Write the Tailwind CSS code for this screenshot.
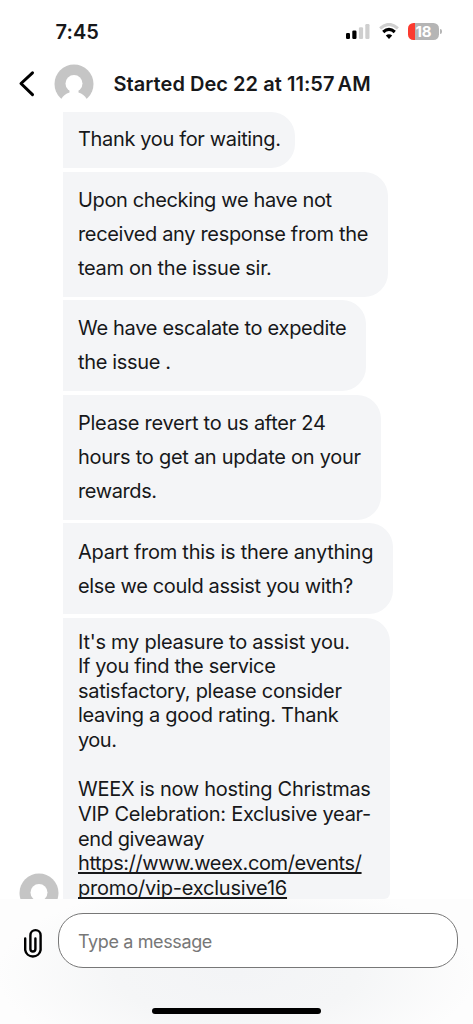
<!DOCTYPE html>
<html lang="en">
<head>
<meta charset="utf-8">
<meta name="viewport" content="width=device-width, initial-scale=1">
<title>Support chat</title>
<script src="https://cdn.jsdelivr.net/npm/@tailwindcss/browser@4"></script>
</head>
<body class="bg-white font-['Inter','Liberation_Sans',sans-serif] text-[#17181a]">
<div class="flex h-[1024px] w-[473px] flex-col overflow-hidden bg-white">

  <!-- Status bar -->
  <header class="flex h-[56px] shrink-0 items-start justify-between pl-[55.5px] pr-[31px] pt-[20px]">
    <span class="text-[20px] font-semibold leading-[24px] tracking-[0.1px]">7:45</span>
    <div class="flex items-start pt-[3px]">
      <svg class="mt-[1px] h-[16px] w-[24px]" viewBox="0 0 24 16">
        <rect x="0" y="9" width="4" height="6" rx="1.2" fill="#000"/>
        <rect x="6.3" y="6.5" width="4.2" height="8.5" rx="1.2" fill="#000"/>
        <rect x="12.9" y="3.3" width="4.2" height="11.7" rx="1.2" fill="#cfcfcf"/>
        <rect x="19.3" y="0" width="4.2" height="15" rx="1.2" fill="#cfcfcf"/>
      </svg>
      <svg class="ml-[9px] h-[16px] w-[20px]" viewBox="0 0 20 16" fill="none">
        <path d="M1.1 5.4Q10-2.6 18.9 5.4" stroke="#cfcfcf" stroke-width="3"/>
        <path d="M4.2 9Q10 3.8 15.8 9" stroke="#000" stroke-width="3.1"/>
        <path d="M10 16L6.8 12.6Q10 10 13.2 12.6Z" fill="#000"/>
      </svg>
      <div class="ml-[9px] flex h-[17px] w-[31px] items-center justify-center overflow-hidden rounded-[5.5px] bg-[linear-gradient(90deg,#fb3b30_6.5px,#b5b5b5_6.5px)] text-[15px] font-bold leading-[17px] text-white">18</div>
      <div class="ml-[1px] mt-[6px] h-[5px] w-[2px] rounded-r-full bg-[#b5b5b5]"></div>
    </div>
  </header>

  <!-- Conversation header -->
  <div class="flex h-[56px] shrink-0 items-center pl-[18px]">
    <svg class="h-[28px] w-[18px]" viewBox="0 0 18 28" fill="none" stroke="#000" stroke-width="3" stroke-linecap="round" stroke-linejoin="round"><path d="M14.5 2.8L3 13.5L14.5 24.6"/></svg>
    <svg class="ml-[18px] h-[40px] w-[40px]" viewBox="0 0 40 40">
      <circle cx="20" cy="20" r="19.5" fill="#c5c5c5"/>
      <g fill="#fff"><circle cx="20" cy="19.5" r="8.5"/><path d="M15.5 25V28.5Q10 30 7.3 35V40H32.7V35Q30 30 24.500 28.5V25Z"/></g>
    </svg>
    <h1 class="ml-[19.5px] whitespace-nowrap text-[20px] font-semibold leading-[24px] tracking-[0.04px]">Started Dec 22 at 11:57<span class="[word-spacing:-2px]"> AM</span></h1>
  </div>

  <!-- Messages -->
  <main class="flex h-[787px] shrink-0 items-end overflow-hidden pl-[19px]">
    <svg class="-mb-[14px] h-[40px] w-[40px] shrink-0" viewBox="0 0 40 40">
      <circle cx="20" cy="20" r="19.5" fill="#c5c5c5"/>
      <g fill="#fff"><circle cx="20" cy="19.5" r="8.5"/><path d="M15.5 25V28.5Q10 30 7.3 35V40H32.7V35Q30 30 24.500 28.5V25Z"/></g>
    </svg>
    <div class="ml-[4px] flex h-[787px] flex-col items-start gap-[3.5px] whitespace-nowrap text-[20px] leading-[34px] *:shrink-0 *:rounded-r-[24px] *:bg-[#f4f5f7] *:pl-[15px]">
      <div class="h-[56px] w-[232px] pt-[10px]">
        <p class="tracking-[-0.35px]">Thank you for waiting.</p>
      </div>
      <div class="h-[125px] w-[325px] pt-[11.5px]">
        <p class="tracking-[-0.37px]">Upon checking we have not</p>
        <p class="tracking-[-0.33px]">received any response from the</p>
        <p class="tracking-[-0.3px]">team on the issue sir.</p>
      </div>
      <div class="h-[91px] w-[303px] pt-[11px]">
        <p class="tracking-[-0.3px]">We have escalate to expedite</p>
        <p class="tracking-[-0.35px]">the issue .</p>
      </div>
      <div class="h-[125px] w-[318px] pt-[11.5px]">
        <p class="tracking-[-0.28px]">Please revert to us after 24</p>
        <p class="tracking-[-0.27px]">hours to get an update on your</p>
        <p class="tracking-[-0.4px]">rewards.</p>
      </div>
      <div class="h-[91px] w-[330px] pt-[11.5px]">
        <p class="tracking-[-0.26px]">Apart from this is there anything</p>
        <p class="tracking-[-0.36px]">else we could assist you with?</p>
      </div>
      <div class="h-[281.5px] w-[327px] rounded-br-[6px]! pt-[12px] leading-[24.65px]">
        <p class="tracking-[-0.26px]">It's my pleasure to assist you.</p>
        <p class="tracking-[-0.35px]">If you find the service</p>
        <p class="tracking-[-0.27px]">satisfactory, please consider</p>
        <p class="tracking-[-0.3px]">leaving a good rating. Thank</p>
        <p class="tracking-[-0.5px]">you.</p>
        <p>&nbsp;</p>
        <p class="tracking-[-0.27px]">WEEX is now hosting Christmas</p>
        <p class="tracking-[-0.28px]">VIP Celebration: Exclusive year-</p>
        <p class="tracking-[-0.4px]">end giveaway</p>
        <a class="block underline decoration-[1.5px] underline-offset-[2px] [text-decoration-skip-ink:none]"><span class="block tracking-[-0.38px]">https://www.weex.com/events/</span><span class="block tracking-[-0.2px]">promo/vip-exclusive16</span></a>
      </div>
    </div>
  </main>

  <!-- Composer -->
  <footer class="flex flex-1 flex-col bg-[radial-gradient(ellipse_240px_95px_at_50%_60%,#f3f4f6_0%,#f5f6f7_50%,#fdfdfd_100%)] pt-[14px]">
    <div class="flex items-center pl-[23px]">
      <svg class="mt-[6px] h-[32px] w-[20px]" viewBox="0 0 20 32" fill="none" stroke="#000" stroke-width="2.4" stroke-linecap="round" stroke-linejoin="round">
        <path d="M2.2 10.5V22A7.8 7.8 0 0 0 17.6 22V7.2A5.1 5.1 0 0 0 7.4 7.2V21A2.5 2.5 0 0 0 12.4 21V10.5"/>
      </svg>
      <div class="ml-[15px] flex h-[55px] w-[400px] items-center rounded-[25px] border border-[#777] bg-white pl-[19px] pt-[1px] text-[18px] tracking-[-0.38px] text-[#777]">Type a message</div>
    </div>
    <div class="mt-[40px] ml-[152px] h-[6px] w-[169px] rounded-full bg-black"></div>
  </footer>
</div>
</body>
</html>
